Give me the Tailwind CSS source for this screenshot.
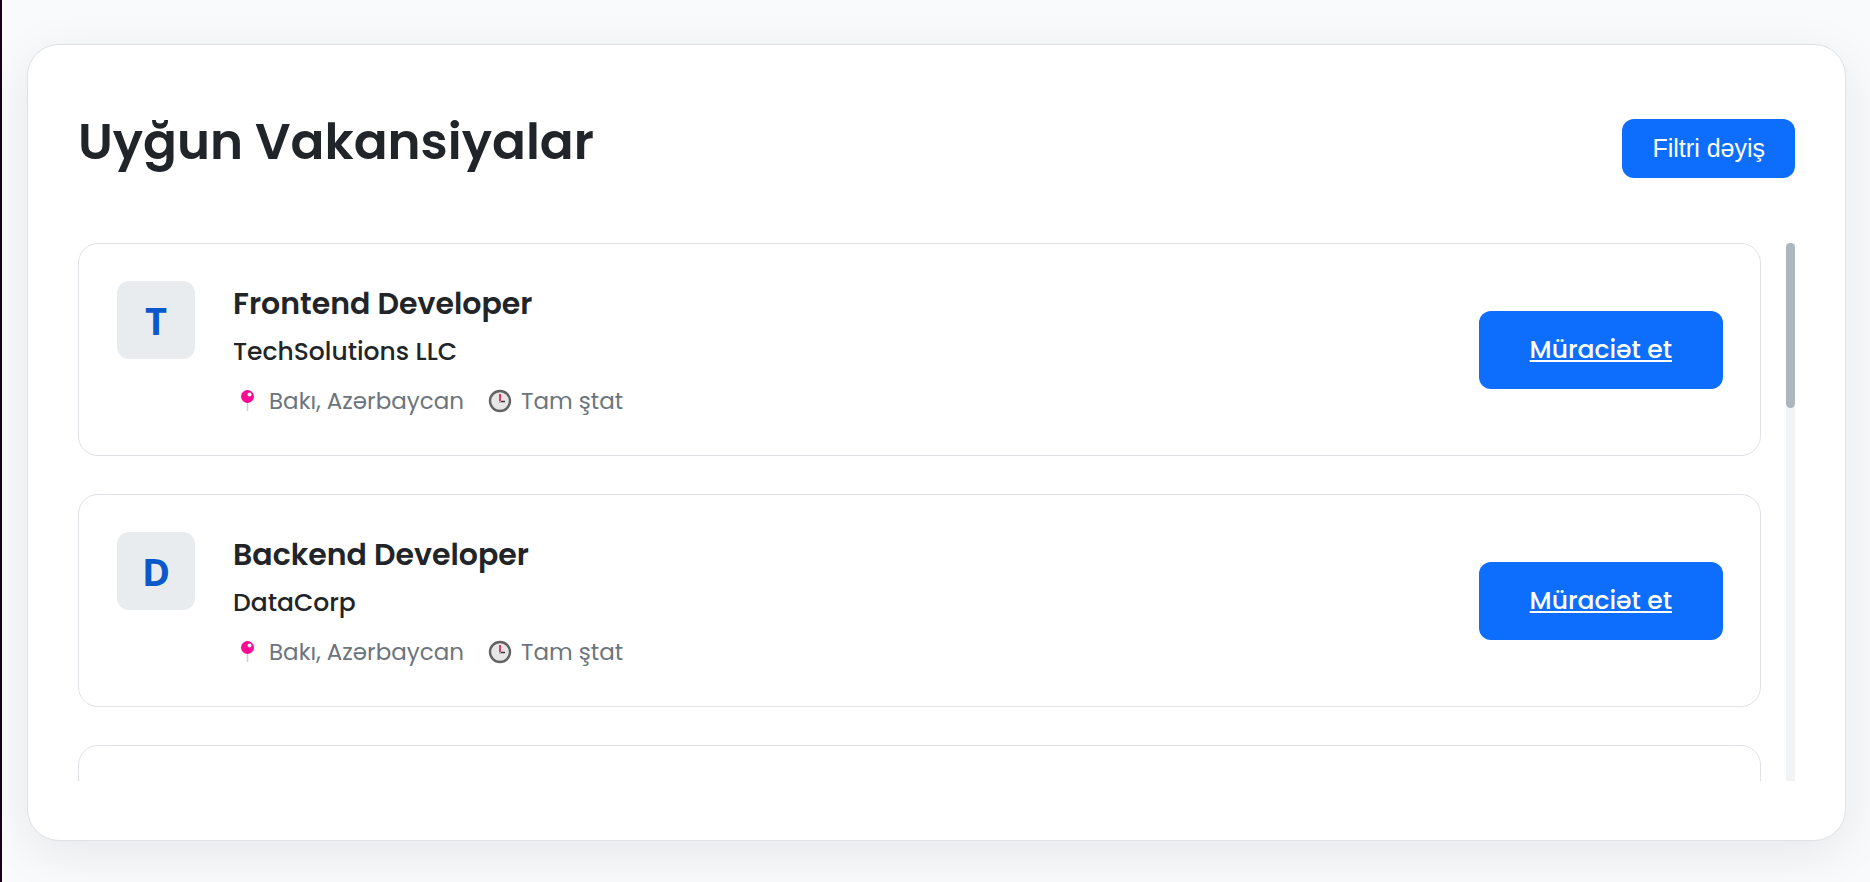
<!DOCTYPE html>
<html lang="az">
<head>
    <meta charset="UTF-8">
    <meta name="viewport" content="width=device-width, initial-scale=1.0">
    <title>Uyğun Vakansiyalar</title>
    <script src="https://cdn.jsdelivr.net/npm/@tailwindcss/browser@4"></script>
</head>
<body class="min-h-screen bg-[#f8fafc] border-l-2 border-[#14001a] font-[Poppins,Inter,sans-serif] text-[#212529]">
    <main class="pt-11 pb-10 pl-[25px] pr-6">
        <div class="bg-white border border-[#dee2e6] rounded-[32px] px-[50px] pt-[74px] pb-[59px] shadow-[0_12px_50px_rgba(0,0,0,0.08)]">

            <!-- Header -->
            <div class="flex justify-between items-start mb-[65px]">
                <h1 class="text-[50px] leading-[46px] font-semibold">Uyğun Vakansiyalar</h1>
                <button type="button" class="h-[59px] px-[30px] rounded-xl bg-[#0d6efd] text-white text-[25px] leading-[29px] font-['Liberation_Sans',Arial,sans-serif] cursor-pointer">Filtri dəyiş</button>
            </div>

            <!-- Vacancy list -->
            <div class="flex gap-[25px] h-[538px]">
                <div class="flex-1 flex flex-col gap-[38px] overflow-hidden">
                    <article class="shrink-0 flex gap-[38px] h-[213px] py-[37px] pl-[38px] pr-[37px] border border-[#dee2e6] rounded-[20px]">
                        <div class="shrink-0 flex items-center justify-center size-[78px] rounded-xl bg-[#e9ecef] text-[#0a58ca] text-[38px] font-bold font-['Open_Sans',sans-serif]">T</div>
                        <div class="flex-1">
                            <h2 class="text-[30px] leading-[46px] font-semibold">Frontend Developer</h2>
                            <p class="mt-[6px] text-[25px] leading-[38px] font-medium">TechSolutions LLC</p>
                            <div class="flex mt-[13px] gap-6 text-[23px] leading-[34px] text-[#6c757d]">
                                <span class="flex items-center gap-2">
                                    <svg class="w-7 h-6" viewBox="0 0 28 24">
                                        <path d="M14.5 12v10" stroke="#cfcfcf" stroke-width="1.5"/>
                                        <circle cx="14.5" cy="7.5" r="6.5" fill="#ff0a93"/>
                                        <circle cx="16.5" cy="5.5" r="2" fill="#fff"/>
                                    </svg>
                                    Bakı, Azərbaycan
                                </span>
                                <span class="flex items-center gap-[9px]">
                                    <svg class="w-6 h-6" viewBox="0 0 24 24">
                                        <circle cx="12" cy="12" r="10" fill="#e6e6e6" stroke="#636363" stroke-width="2.4"/>
                                        <path d="M12 12.5h5" stroke="#333" stroke-width="1.5"/>
                                        <path d="M12 5v7" stroke="#e3265c" stroke-width="1.8"/>
                                        <path d="M11 12h2v2h-2z" fill="#b5b5b5"/>
                                    </svg>
                                    Tam ştat
                                </span>
                            </div>
                        </div>
                        <a href="#" class="self-center flex items-center h-[78px] px-[51px] rounded-xl bg-[#0d6efd] text-white text-[25px] font-medium underline">Müraciət et</a>
                    </article>

                    <article class="shrink-0 flex gap-[38px] h-[213px] py-[37px] pl-[38px] pr-[37px] border border-[#dee2e6] rounded-[20px]">
                        <div class="shrink-0 flex items-center justify-center size-[78px] rounded-xl bg-[#e9ecef] text-[#0a58ca] text-[38px] font-bold font-['Open_Sans',sans-serif]">D</div>
                        <div class="flex-1">
                            <h2 class="text-[30px] leading-[46px] font-semibold">Backend Developer</h2>
                            <p class="mt-[6px] text-[25px] leading-[38px] font-medium">DataCorp</p>
                            <div class="flex mt-[13px] gap-6 text-[23px] leading-[34px] text-[#6c757d]">
                                <span class="flex items-center gap-2">
                                    <svg class="w-7 h-6" viewBox="0 0 28 24">
                                        <path d="M14.5 12v10" stroke="#cfcfcf" stroke-width="1.5"/>
                                        <circle cx="14.5" cy="7.5" r="6.5" fill="#ff0a93"/>
                                        <circle cx="16.5" cy="5.5" r="2" fill="#fff"/>
                                    </svg>
                                    Bakı, Azərbaycan
                                </span>
                                <span class="flex items-center gap-[9px]">
                                    <svg class="w-6 h-6" viewBox="0 0 24 24">
                                        <circle cx="12" cy="12" r="10" fill="#e6e6e6" stroke="#636363" stroke-width="2.4"/>
                                        <path d="M12 12.5h5" stroke="#333" stroke-width="1.5"/>
                                        <path d="M12 5v7" stroke="#e3265c" stroke-width="1.8"/>
                                        <path d="M11 12h2v2h-2z" fill="#b5b5b5"/>
                                    </svg>
                                    Tam ştat
                                </span>
                            </div>
                        </div>
                        <a href="#" class="self-center flex items-center h-[78px] px-[51px] rounded-xl bg-[#0d6efd] text-white text-[25px] font-medium underline">Müraciət et</a>
                    </article>

                    <article class="shrink-0 h-[213px] border border-[#dee2e6] rounded-[20px]"></article>
                </div>

                <!-- Scrollbar -->
                <div class="w-[9px] bg-[#f1f3f5]">
                    <div class="h-[165px] rounded-full bg-[#adb5bd]"></div>
                </div>
            </div>
        </div>
    </main>
</body>
</html>
